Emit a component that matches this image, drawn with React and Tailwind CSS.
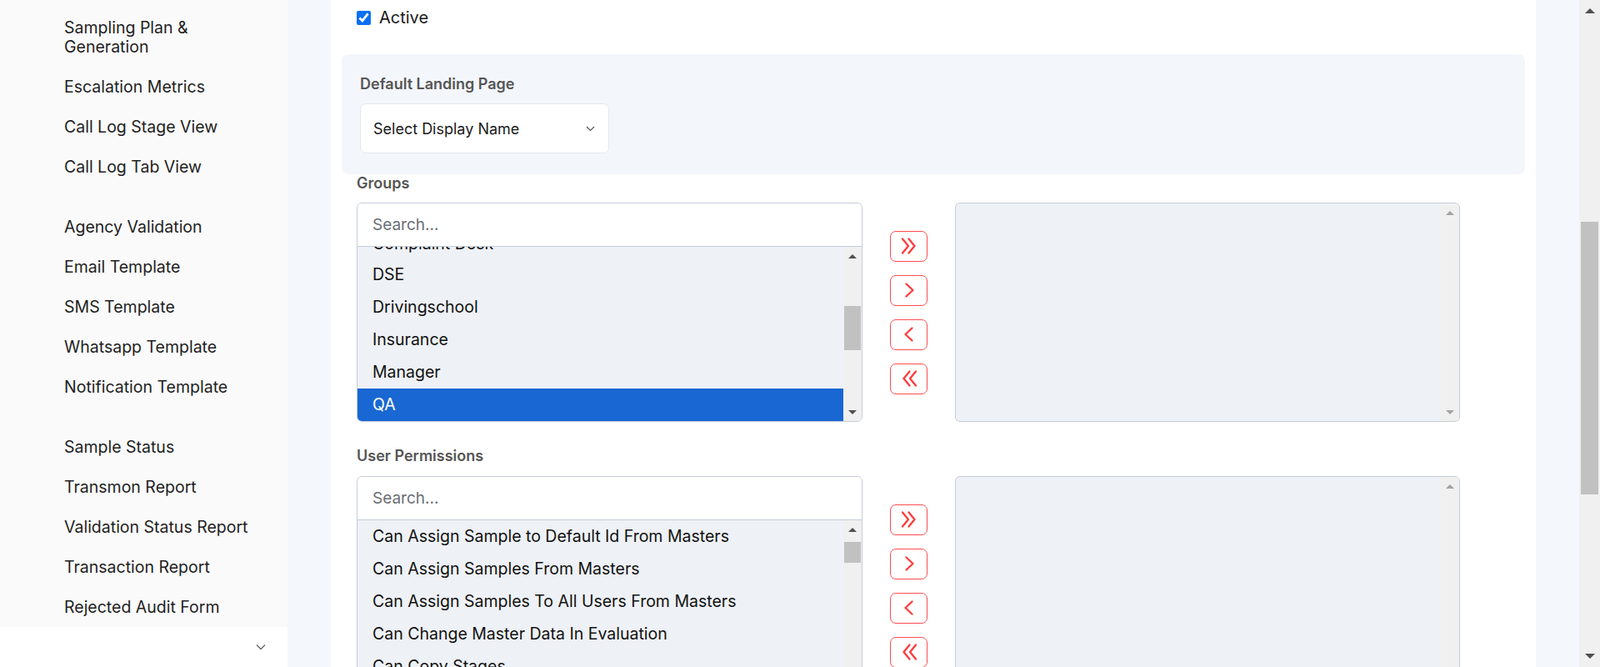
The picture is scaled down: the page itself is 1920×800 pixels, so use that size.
import { useState } from "react";

const NAV = [
  ["Sampling Plan &", "Generation"],
  ["Escalation Metrics"],
  ["Call Log Stage View"],
  ["Call Log Tab View"],
  null,
  ["Agency Validation"],
  ["Email Template"],
  ["SMS Template"],
  ["Whatsapp Template"],
  ["Notification Template"],
  null,
  ["Sample Status"],
  ["Transmon Report"],
  ["Validation Status Report"],
  ["Transaction Report"],
  ["Rejected Audit Form"],
];

const GROUPS = ["Complaint Desk", "DSE", "Drivingschool", "Insurance", "Manager", "QA"];

const PERMISSIONS = [
  "Can Assign Sample to Default Id From Masters",
  "Can Assign Samples From Masters",
  "Can Assign Samples To All Users From Masters",
  "Can Change Master Data In Evaluation",
  "Can Copy Stages",
  "Can Create Audit",
];

function Chevron({ dir = "right", double = false }) {
  const single =
    dir === "right" ? "M7.5 3.5l8 7.5-8 7.5" : "M14.5 3.5l-8 7.5 8 7.5";
  const dbl =
    dir === "right"
      ? "M3 2.5l7 8.5-7 8.5M10.5 2.5l7 8.5-7 8.5"
      : "M11.5 2.5l-7 8.5 7 8.5M19 2.5l-7 8.5 7 8.5";
  return (
    <svg width="22" height="22" viewBox="0 0 22 22" fill="none">
      <path
        d={double ? dbl : single}
        stroke="#ff3b3b"
        strokeWidth="2.3"
        strokeLinecap="round"
        strokeLinejoin="round"
      />
    </svg>
  );
}

function ScrollTrack({ thumbTop, thumbHeight, light }) {
  const arrow = light ? "#a3a3a3" : "#505050";
  return (
    <div className="w-[22px] shrink-0 bg-[#f0f0f0] flex flex-col items-center">
      <div className="h-[22px] flex items-center justify-center">
        <div
          className="w-0 h-0 border-x-[5px] border-x-transparent border-b-[5px]"
          style={{ borderBottomColor: arrow }}
        />
      </div>
      <div className="flex-1 w-full px-[1px]">
        {thumbHeight > 0 && (
          <div
            className="w-full bg-[#c1c1c1]"
            style={{ marginTop: thumbTop, height: thumbHeight }}
          />
        )}
      </div>
      <div className="h-[22px] flex items-center justify-center">
        <div
          className="w-0 h-0 border-x-[5px] border-x-transparent border-t-[5px]"
          style={{ borderTopColor: arrow }}
        />
      </div>
    </div>
  );
}

function DualList({ items, selected, offset, firstHeight, thumbTop, thumbHeight }) {
  const [query, setQuery] = useState("");
  return (
    <div className="flex items-stretch h-[263px]">
      <div className="w-[607px] border border-[#c5ccd8] rounded-[6px] overflow-hidden flex flex-col">
        <input
          value={query}
          onChange={(e) => setQuery(e.target.value)}
          placeholder="Search..."
          className="h-[52px] shrink-0 bg-white px-[18px] text-[19px] text-[#222] placeholder:text-[#6b6f76] outline-none border-b border-[#c5ccd8]"
        />
        <div className="flex flex-1 min-h-0 bg-[#eef1f6]">
          <div className="flex-1 overflow-hidden">
            <div style={{ marginTop: -offset }}>
              {items.map((it, i) => (
                <div
                  key={it}
                  style={i === 0 && firstHeight ? { height: firstHeight } : undefined}
                  className={
                    "h-[39px] flex items-center px-[18px] text-[19.5px] " +
                    (it === selected ? "bg-[#1967d2] text-white" : "text-[#111]")
                  }
                >
                  {it}
                </div>
              ))}
            </div>
          </div>
          <ScrollTrack thumbTop={thumbTop} thumbHeight={thumbHeight} />
        </div>
      </div>

      <div className="w-[111px] flex flex-col items-center justify-center gap-[16px]">
        <button className="w-[45px] h-[37px] border border-[#ff4d4f] rounded-[7px] bg-white flex items-center justify-center">
          <Chevron dir="right" double />
        </button>
        <button className="w-[45px] h-[37px] border border-[#ff4d4f] rounded-[7px] bg-white flex items-center justify-center">
          <Chevron dir="right" />
        </button>
        <button className="w-[45px] h-[37px] border border-[#ff4d4f] rounded-[7px] bg-white flex items-center justify-center">
          <Chevron dir="left" />
        </button>
        <button className="w-[45px] h-[37px] border border-[#ff4d4f] rounded-[7px] bg-white flex items-center justify-center">
          <Chevron dir="left" double />
        </button>
      </div>

      <div className="w-[606px] border border-[#c5ccd8] rounded-[6px] overflow-hidden flex bg-[#eef1f6]">
        <div className="flex-1" />
        <ScrollTrack thumbTop={0} thumbHeight={0} light />
      </div>
    </div>
  );
}

export default function App() {
  return (
    <div
      className="flex w-full h-[800px] overflow-hidden bg-[#f4f7fc]"
      style={{ fontFamily: "Inter, 'Noto Sans', sans-serif" }}
    >
      {/* Sidebar */}
      <aside className="w-[345px] shrink-0 flex flex-col">
        <div className="h-[752px] bg-[#fafafa] pt-[9px] overflow-hidden">
          {NAV.map((item, i) =>
            item ? (
              <div
                key={i}
                className="pl-[77px] py-[12.5px] text-[19.5px] leading-[23px] text-[#1f1f1f]"
              >
                {item.map((line) => (
                  <div key={line}>{line}</div>
                ))}
              </div>
            ) : (
              <div key={i} className="h-[24px]" />
            )
          )}
        </div>
        <div className="h-[48px] bg-white flex items-center justify-end pr-[26px]">
          <svg width="12" height="8" viewBox="0 0 12 8" fill="none">
            <path d="M1 1.5l5 5 5-5" stroke="#666" strokeWidth="1.3" />
          </svg>
        </div>
      </aside>

      {/* Main */}
      <main className="flex-1 px-[52px]">
        <div className="bg-white h-full px-[13px]">
          <label className="h-[42px] flex items-center gap-[10px] pl-[18px] text-[20px] text-[#1a1a1a]">
            <input
              type="checkbox"
              defaultChecked
              className="w-[17px] h-[17px] accent-[#0b6ff2]"
            />
            Active
          </label>

          <div className="mt-[23px] h-[144px] bg-[#f3f6fb] rounded-[8px] pl-[22px] pt-[24px]">
            <div className="text-[18px] leading-[24px] font-semibold text-[#555]">
              Default Landing Page
            </div>
            <div className="mt-[11px] w-[299px] h-[60px] bg-white border border-[#e4e8ef] rounded-[7px] flex items-center justify-between pl-[15px] pr-[16px]">
              <span className="text-[18px] text-[#1a1a1a]">Select Display Name</span>
              <svg width="11" height="7" viewBox="0 0 11 7" fill="none">
                <path d="M1 1l4.5 4.5L10 1" stroke="#555" strokeWidth="1.2" />
              </svg>
            </div>
          </div>

          <div className="pl-[18px]">
            <div className="h-[22px] leading-[22px] text-[18px] font-semibold text-[#555]">
              Groups
            </div>
            <div className="mt-[12px]">
              <DualList
                items={GROUPS}
                selected="QA"
                offset={20}
                firstHeight={34}
                thumbTop={49}
                thumbHeight={53}
              />
            </div>

            <div className="mt-[30px] h-[22px] leading-[22px] text-[18px] font-semibold text-[#555]">
              User Permissions
            </div>
            <div className="mt-[13px]">
              <DualList
                items={PERMISSIONS}
                selected=""
                offset={0}
                thumbTop={4}
                thumbHeight={25}
              />
            </div>
          </div>
        </div>
      </main>

      {/* Page scrollbar */}
      <div className="w-[25px] shrink-0 bg-[#f0f0f0] flex flex-col items-center">
        <div className="h-[26px] flex items-center justify-center">
          <div className="w-0 h-0 border-x-[6px] border-x-transparent border-b-[6px] border-b-[#505050]" />
        </div>
        <div className="flex-1 w-full px-[2px]">
          <div className="mt-[240px] h-[327px] bg-[#c1c1c1]" />
        </div>
        <div className="h-[26px] flex items-center justify-center">
          <div className="w-0 h-0 border-x-[6px] border-x-transparent border-t-[6px] border-t-[#505050]" />
        </div>
      </div>
    </div>
  );
}
